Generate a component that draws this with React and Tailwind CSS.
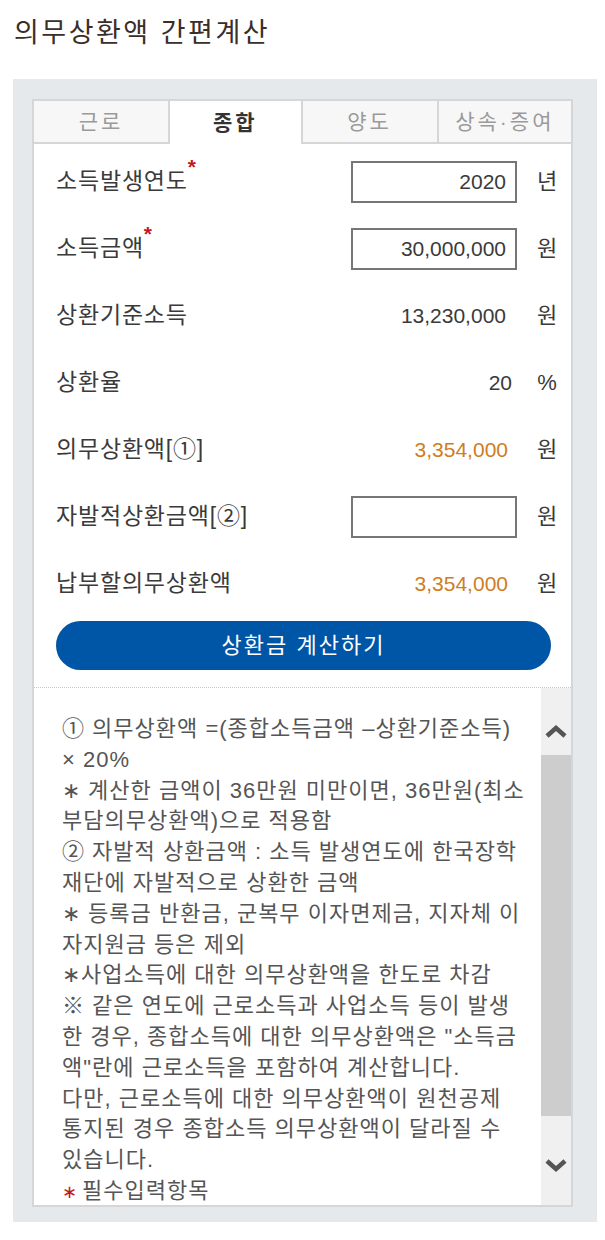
import React from 'react';

const tabs = ['근로', '종합', '양도', '상속·증여'];

const rows = [
  { label: '소득발생연도', req: true, value: '2020', input: true, unit: '년' },
  { label: '소득금액', req: true, value: '30,000,000', input: true, unit: '원' },
  { label: '상환기준소득', value: '13,230,000', unit: '원' },
  { label: '상환율', value: '20', unit: '%', pad: 'pr-[5px]' },
  { label: '의무상환액[①]', value: '3,354,000', unit: '원', orange: true },
  { label: '자발적상환금액[②]', value: '', input: true, unit: '원' },
  { label: '납부할의무상환액', value: '3,354,000', unit: '원', orange: true },
];

const notes = [
  '① 의무상환액 =(종합소득금액 –상환기준소득)',
  '× 20%',
  '∗ 계산한 금액이 36만원 미만이면, 36만원(최소',
  '부담의무상환액)으로 적용함',
  '② 자발적 상환금액 : 소득 발생연도에 한국장학',
  '재단에 자발적으로 상환한 금액',
  '∗ 등록금 반환금, 군복무 이자면제금, 지자체 이',
  '자지원금 등은 제외',
  '∗사업소득에 대한 의무상환액을 한도로 차감',
  '※ 같은 연도에 근로소득과 사업소득 등이 발생',
  '한 경우, 종합소득에 대한 의무상환액은 "소득금',
  '액"란에 근로소득을 포함하여 계산합니다.',
  '다만, 근로소득에 대한 의무상환액이 원천공제',
  '통지된 경우 종합소득 의무상환액이 달라질 수',
  '있습니다.',
];

function Chevron({ down }) {
  return (
    <svg width="22" height="14" viewBox="0 0 22 14">
      <polyline
        points={down ? '2,3 11,11 20,3' : '2,11 11,3 20,11'}
        fill="none"
        stroke="#555"
        strokeWidth="4.5"
      />
    </svg>
  );
}

export default function App() {
  return (
    <div className="w-[605px] h-[1240px] bg-white font-['Liberation_Sans','Noto_Sans_CJK_KR',sans-serif]">
      {/* Title */}
      <div className="h-[79px] pl-[14px] pt-[13px]">
        <h1 className="text-[27px] leading-[40px] tracking-[2.5px] font-normal text-[#3b2e28]">의무상환액 간편계산</h1>
      </div>

      {/* Gray panel */}
      <div className="ml-[13px] w-[584px] bg-[#e6e9ec] pt-[20px] pl-[19px] pr-[24px] pb-[15px]">
        <div className="bg-white border-2 border-[#d4d6d8]">
          {/* Tabs */}
          <div className="grid grid-cols-4">
            {tabs.map((t, i) => {
              const active = i === 1;
              return (
                <div
                  key={t}
                  className={
                    'h-[43px] flex items-center justify-center text-[21px] tracking-[3px] ' +
                    (active
                      ? 'bg-white text-[#333] font-bold border-l-2 border-r-2 border-[#d6d6d6]'
                      : 'bg-[#f7f7f7] text-[#9a9a9a] border-b-2 border-[#d6d6d6]') +
                    (i === 3 ? ' border-l-2' : '')
                  }
                >
                  {t}
                </div>
              );
            })}
          </div>

          {/* Form rows */}
          <div className="pt-[4px]">
            {rows.map((r) => (
              <div key={r.label} className="h-[67px] flex items-center pl-[22px] pr-[12px]">
                <div className="flex-1 text-[23px] tracking-[0.8px] text-[#3a3a3a] whitespace-nowrap">
                  {r.label}
                  {r.req && (
                    <sup className="text-[#c4161c] text-[21px] font-bold -top-[15px]">*</sup>
                  )}
                </div>
                {r.input ? (
                  <div className="w-[166px] h-[42px] border-2 border-[#767676] flex items-center justify-end pr-[9px] text-[21px] text-[#3a3a3a]">
                    {r.value}
                  </div>
                ) : (
                  <div
                    className={
                      'w-[166px] text-right text-[21px] ' +
                      (r.pad || (r.orange ? 'pr-[9px]' : 'pr-[11px]')) +
                      (r.orange ? ' text-[#cf7d24]' : ' text-[#3a3a3a]')
                    }
                  >
                    {r.value}
                  </div>
                )}
                <div className="ml-[18px] w-[24px] text-center text-[22px] text-[#3a3a3a]">{r.unit}</div>
              </div>
            ))}
          </div>

          {/* Button */}
          <div className="pl-[22px] pr-[20px] pt-[4px] pb-[17px] border-b border-dotted border-[#c8c8c8]">
            <button className="w-full h-[49px] rounded-full bg-[#0056a6] text-white text-[22px] tracking-[2px]">
              상환금 계산하기
            </button>
          </div>

          {/* Notes with scrollbar */}
          <div className="h-[517px] flex">
            <div className="flex-1 overflow-hidden pl-[28px] pt-[26px] text-[22px] leading-[30.8px] tracking-[1px] text-[#555]">
              {notes.map((n, i) => (
                <div key={i} className="whitespace-nowrap">{n}</div>
              ))}
              <div className="whitespace-nowrap">
                <span className="text-[#c4161c] text-[18px] mr-[4px]">∗</span>필수입력항목
              </div>
            </div>
            <div className="w-[30px] bg-[#f0f0f0] flex flex-col">
              <div className="h-[67px] flex justify-center pt-[37px]">
                <Chevron />
              </div>
              <div className="h-[361px] bg-[#cdcdcd]" />
              <div className="flex-1 flex justify-center pt-[42px]">
                <Chevron down />
              </div>
            </div>
          </div>
        </div>
      </div>
    </div>
  );
}
